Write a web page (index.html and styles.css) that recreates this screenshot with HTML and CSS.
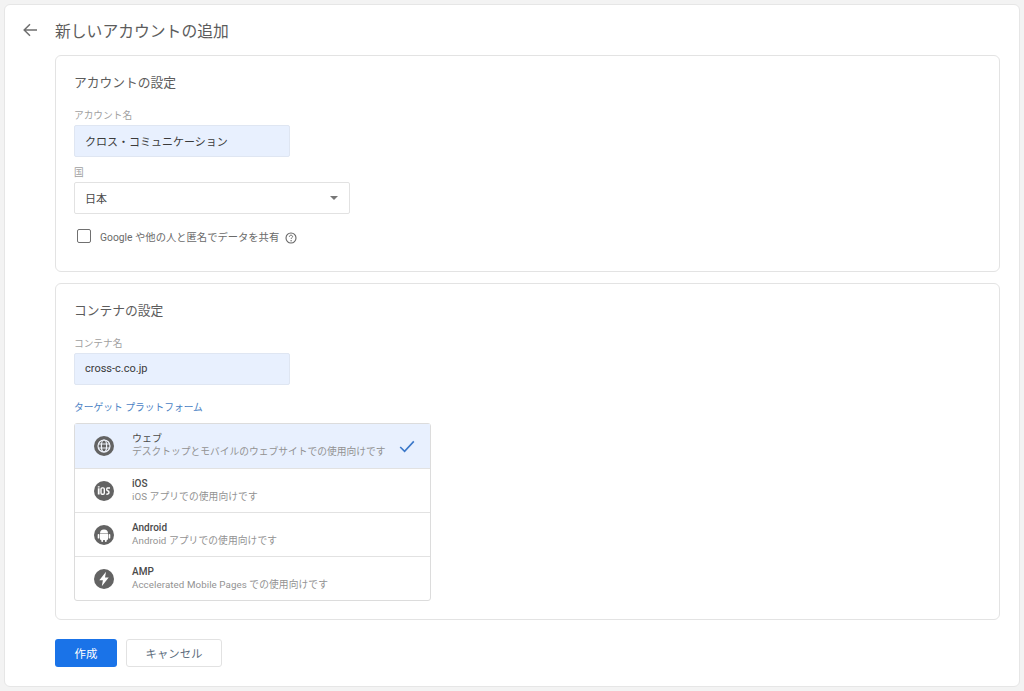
FILE: index.html
```html
<!DOCTYPE html>
<html lang="ja">
<head>
<meta charset="utf-8">
<title>新しいアカウントの追加</title>
<link rel="stylesheet" href="styles.css">
</head>
<body>
<main class="page">
  <header class="head">
    <svg class="back" width="16" height="16" viewBox="0 0 16 16"><path d="M15 8H2.500M8 2.200 2.200 8 8 13.800" fill="none" stroke="#6f6f6f" stroke-width="1.500"/></svg>
    <h1 class="title">新しいアカウントの追加</h1>
  </header>
  <div class="body">
    <section class="panel panel-account">
      <h2 class="panel-title">アカウントの設定</h2>
      <label class="field-label first">アカウント名</label>
      <div class="input">クロス・コミュニケーション</div>
      <label class="field-label second">国</label>
      <div class="select"><span>日本</span><i class="caret"></i></div>
      <div class="share">
        <span class="check"></span>
        <span class="share-text">Google や他の人と匿名でデータを共有</span>
        <svg class="help" width="12" height="12" viewBox="0 0 12 12"><circle cx="6" cy="6" r="5" fill="none" stroke="#666" stroke-width="1.100"/><path d="M4.400 4.800C4.400 3.800 5.100 3.200 6 3.200s1.600.6 1.600 1.400c0 1.100-1.500 1.200-1.500 2.300" fill="none" stroke="#666" stroke-width="1"/><circle cx="6.100" cy="8.700" r=".7" fill="#666"/></svg>
      </div>
    </section>
    <section class="panel panel-container">
      <h2 class="panel-title">コンテナの設定</h2>
      <label class="field-label first">コンテナ名</label>
      <div class="input">cross-c.co.jp</div>
      <div class="target-label">ターゲット プラットフォーム</div>
      <ul class="platforms">
        <li class="platform selected">
          <svg class="p-icon" width="20" height="20" viewBox="0 0 20 20"><circle cx="10" cy="10" r="10" fill="#636363"/><g fill="none" stroke="#eef2fa" stroke-width="1.200"><circle cx="10" cy="10" r="6"/><ellipse cx="10" cy="10" rx="2.600" ry="6"/><path d="M4.400 8h11.200M4.400 12h11.200"/></g></svg>
          <div class="p-text"><div class="p-name normal">ウェブ</div><div class="p-desc">デスクトップとモバイルのウェブサイトでの使用向けです</div></div>
          <svg class="tick" width="16" height="13" viewBox="0 0 16 13"><path d="M1.200 7 5.600 11.400 14.800 1.400" fill="none" stroke="#3b78c9" stroke-width="1.600"/></svg>
        </li>
        <li class="platform">
          <svg class="p-icon" width="20" height="20" viewBox="0 0 20 20"><circle cx="10" cy="10" r="10" fill="#636363"/><path d="M3.800 7.200h1.800v6.200H3.800zM3.800 5.200h1.800v1.400H3.800z" fill="#fff"/><rect x="7" y="6.900" width="3.300" height="6.300" rx="1.200" fill="none" stroke="#fff" stroke-width="1.400"/><path d="M16 7h-2.500c-1 0-1.100 2.600 0 2.800s1.600.3 1.500 1.500c0 1.200-.5 1.900-2.700 1.900" fill="none" stroke="#fff" stroke-width="1.400"/></svg>
          <div class="p-text"><div class="p-name">iOS</div><div class="p-desc wide">iOS アプリでの使用向けです</div></div>
        </li>
        <li class="platform">
          <svg class="p-icon" width="20" height="20" viewBox="0 0 20 20"><circle cx="10" cy="10" r="10" fill="#636363"/><path d="M6 8.400a4 4 0 0 1 8 0zM6 9.100h8v4.900a1 1 0 0 1-1 1H7a1 1 0 0 1-1-1z" fill="#fff"/><rect x="3.700" y="8.900" width="1.700" height="4.600" rx=".85" fill="#fff"/><rect x="14.600" y="8.900" width="1.700" height="4.600" rx=".85" fill="#fff"/><rect x="7.300" y="14" width="1.800" height="3" rx=".9" fill="#fff"/><rect x="10.900" y="14" width="1.800" height="3" rx=".9" fill="#fff"/></svg>
          <div class="p-text"><div class="p-name">Android</div><div class="p-desc wide">Android アプリでの使用向けです</div></div>
        </li>
        <li class="platform">
          <svg class="p-icon" width="20" height="20" viewBox="0 0 20 20"><circle cx="10" cy="10" r="10" fill="#636363"/><path d="M12 2.800 5.300 11.200h3.600l-1.100 6 6.900-8.800h-3.700z" fill="#fff"/></svg>
          <div class="p-text"><div class="p-name">AMP</div><div class="p-desc wide">Accelerated Mobile Pages での使用向けです</div></div>
        </li>
      </ul>
    </section>
    <div class="actions">
      <button class="btn primary">作成</button>
      <button class="btn secondary">キャンセル</button>
    </div>
  </div>
</main>
</body>
</html>
```
FILE: styles.css
```css
* { box-sizing: border-box; }
html, body { margin: 0; height: 100%; }
body {
  background: #f3f3f3;
  padding: 4px;
  font-family: Roboto, "Noto Sans CJK JP", sans-serif;
  color: #3c4043;
  overflow: hidden;
}
.page {
  width: 1016px;
  height: 683px;
  background: #fff;
  border: 1px solid #e6e6e6;
  border-radius: 6px;
}
.head {
  display: flex;
  align-items: center;
  height: 50px;
  padding-left: 17px;
}
.back { flex: none; }
.title {
  margin: 0 0 0 17px;
  font-size: 15.8px;
  font-weight: 400;
  color: #5c5c5c;
}
.body { padding: 0 19px 0 50px; }
.panel {
  border: 1px solid #e3e3e3;
  border-radius: 6px;
  padding: 0 18px;
}
.panel-account { height: 217px; margin-bottom: 11px; }
.panel-container { height: 337px; }
.panel-title {
  margin: 0;
  padding-top: 18px;
  font-size: 12.75px;
  line-height: 18px;
  font-weight: 400;
  color: #5c5c5c;
}
.field-label {
  display: block;
  font-size: 9.7px;
  line-height: 14px;
  color: #a0a0a0;
}
.field-label.first { margin-top: 17px; margin-bottom: 2px; }
.field-label.second { margin-top: 9px; margin-bottom: 2px; }
.input {
  display: flex;
  align-items: center;
  width: 216px;
  height: 32px;
  padding: 0 0 1px 10px;
  background: #e8f0fe;
  border: 1px solid #dfe6f2;
  border-radius: 2px;
  font-size: 11px;
  color: #3a3a3a;
}
.select {
  display: flex;
  align-items: center;
  justify-content: space-between;
  width: 276px;
  height: 32px;
  padding: 0 11px 1px 10px;
  border: 1px solid #e2e2e2;
  border-radius: 2px;
  font-size: 11px;
  color: #4a4a4a;
}
.caret {
  width: 0;
  height: 0;
  border-left: 4px solid transparent;
  border-right: 4px solid transparent;
  border-top: 4px solid #777;
}
.share {
  display: flex;
  align-items: center;
  margin-top: 13px;
  margin-left: 3px;
}
.check {
  width: 14px;
  height: 14px;
  border: 1.5px solid #707070;
  border-radius: 2px;
}
.share-text {
  margin-left: 9px;
  margin-top: 4px;
  font-size: 10.3px;
  line-height: 14px;
  color: #6a6a6a;
  white-space: nowrap;
}
.help { margin-left: 6px; margin-top: 3px; }
.target-label {
  margin-top: 16px;
  font-size: 9.75px;
  line-height: 14px;
  color: #4a82c4;
}
.platforms {
  list-style: none;
  margin: 8px 0 0;
  padding: 0;
  width: 357px;
  border: 1px solid #dcdcdc;
  border-radius: 3px;
}
.platform {
  display: flex;
  align-items: center;
  height: 44px;
  padding-left: 19px;
  border-top: 1px solid #e2e2e2;
}
.platform:first-child { border-top: 0; }
.platform.selected { background: #e8f0fe; }
.p-icon { flex: none; }
.p-text { margin: 0 0 2px 18px; flex: 1; }
.p-name {
  font-size: 10px;
  line-height: 13px;
  font-weight: 500;
  color: #4a4a4a;
}
.p-name.normal { font-weight: 400; }
.p-desc {
  font-size: 9.75px;
  line-height: 13px;
  color: #929292;
  white-space: nowrap;
}
.p-desc.wide { letter-spacing: .08px; }
.tick { flex: none; margin-right: 15px; }
.actions {
  display: flex;
  gap: 9px;
  margin-top: 19px;
}
.btn {
  height: 28px;
  font-family: inherit;
  font-size: 11.4px;
  border-radius: 3px;
  padding: 0 0 1px;
}
.primary {
  width: 62px;
  background: #1a73e8;
  border: 0;
  color: #fff;
}
.secondary {
  width: 96px;
  background: #fff;
  border: 1px solid #e2e2e2;
  color: #5f6f80;
}
```
